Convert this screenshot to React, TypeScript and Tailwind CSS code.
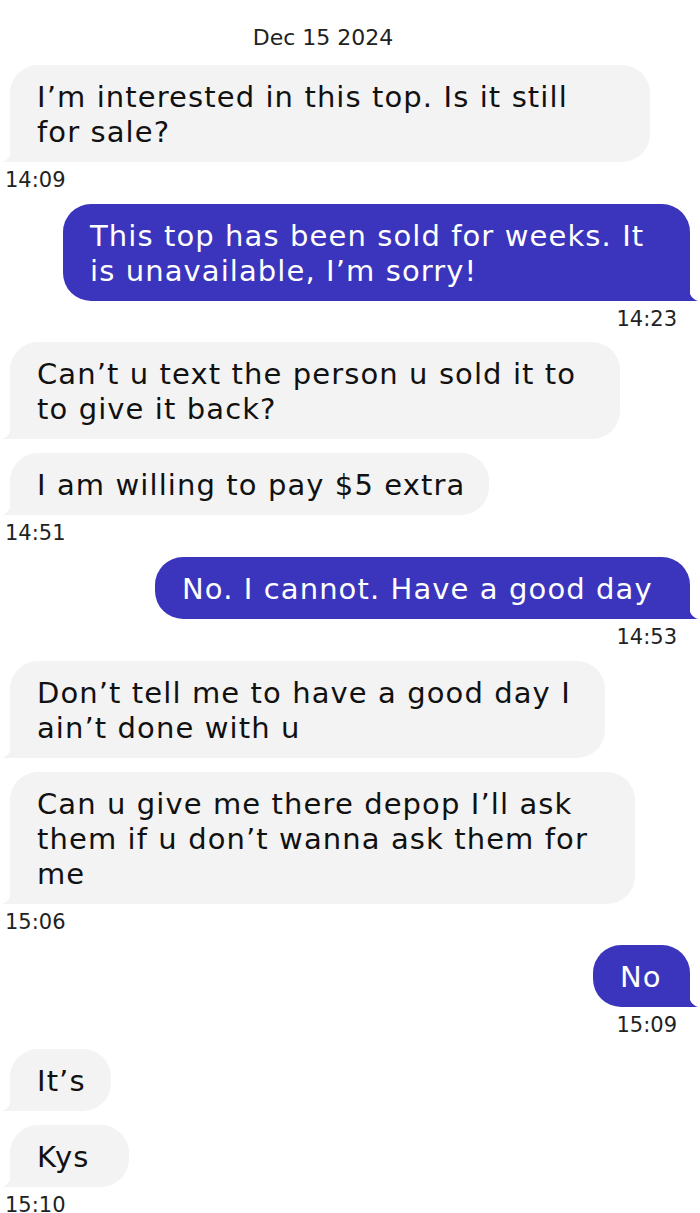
import type { ReactNode } from 'react';

type Msg = { lines: string[]; width: number };
type Group = { from: 'them' | 'me'; time: string; msgs: Msg[] };

const groups: Group[] = [
  { from: 'them', time: '14:09', msgs: [{ lines: ['I’m interested in this top. Is it still', 'for sale?'], width: 640 }] },
  { from: 'me', time: '14:23', msgs: [{ lines: ['This top has been sold for weeks. It', 'is unavailable, I’m sorry!'], width: 627 }] },
  {
    from: 'them',
    time: '14:51',
    msgs: [
      { lines: ['Can’t u text the person u sold it to', 'to give it back?'], width: 610 },
      { lines: ['I am willing to pay $5 extra'], width: 479 },
    ],
  },
  { from: 'me', time: '14:53', msgs: [{ lines: ['No. I cannot. Have a good day'], width: 535 }] },
  {
    from: 'them',
    time: '15:06',
    msgs: [
      { lines: ['Don’t tell me to have a good day I', 'ain’t done with u'], width: 595 },
      { lines: ['Can u give me there depop I’ll ask', 'them if u don’t wanna ask them for', 'me'], width: 625 },
    ],
  },
  { from: 'me', time: '15:09', msgs: [{ lines: ['No'], width: 97 }] },
  {
    from: 'them',
    time: '15:10',
    msgs: [
      { lines: ['It’s'], width: 101 },
      { lines: ['Kys'], width: 119 },
    ],
  },
];

function Bubble({ mine, width, children }: { mine: boolean; width: number; children: ReactNode }) {
  return (
    <div
      className={
        mine
          ? 'relative self-end mr-[10px] bg-[#3b35bd] text-white rounded-[28px] rounded-br-none'
          : 'relative self-start ml-[10px] bg-[#f3f3f3] text-[#111] rounded-[28px] rounded-bl-none'
      }
      style={{ width }}
    >
      <div className="pl-[27px] pt-[15px] pb-[12px] text-[29px] leading-[35px] tracking-[1.1px] whitespace-nowrap">
        {children}
      </div>
      {mine ? (
        <svg className="absolute -right-[8px] bottom-0" width="9" height="14" viewBox="0 0 9 14">
          <path d="M0 0 C0 8 3 12 9 14 L0 14 Z" fill="#3b35bd" />
        </svg>
      ) : (
        <svg className="absolute -left-[8px] bottom-0" width="9" height="14" viewBox="0 0 9 14">
          <path d="M9 0 C9 8 6 12 0 14 L9 14 Z" fill="#f3f3f3" />
        </svg>
      )}
    </div>
  );
}

export default function App() {
  return (
    <div className="w-[700px] h-[1213px] bg-white overflow-hidden flex flex-col font-['DejaVu_Sans',sans-serif]">
      <div className="pt-[24px] pr-[54px] text-center text-[22px] leading-[28px] text-[#222]">Dec 15 2024</div>

      {groups.map((g, i) => {
        const mine = g.from === 'me';
        const last = i === groups.length - 1;
        return (
          <div
            key={i}
            className={`flex flex-col ${i === 0 ? 'mt-[13px]' : i === 2 || i === 5 ? 'mt-[13px]' : 'mt-[14px]'}`}
          >
            <div className="flex flex-col gap-[14px]">
              {g.msgs.map((m, j) => (
                <Bubble key={j} mine={mine} width={m.width}>
                  {m.lines.map((l, k) => (
                    <div key={k}>{l}</div>
                  ))}
                </Bubble>
              ))}
            </div>
            <div
              className={`text-[21px] text-[#222] ${last ? 'mt-[9px] leading-[18px]' : 'mt-[8px] leading-[20px]'} ${
                mine ? 'self-end mr-[23px]' : 'self-start ml-[5px]'
              }`}
            >
              {g.time}
            </div>
          </div>
        );
      })}
    </div>
  );
}
